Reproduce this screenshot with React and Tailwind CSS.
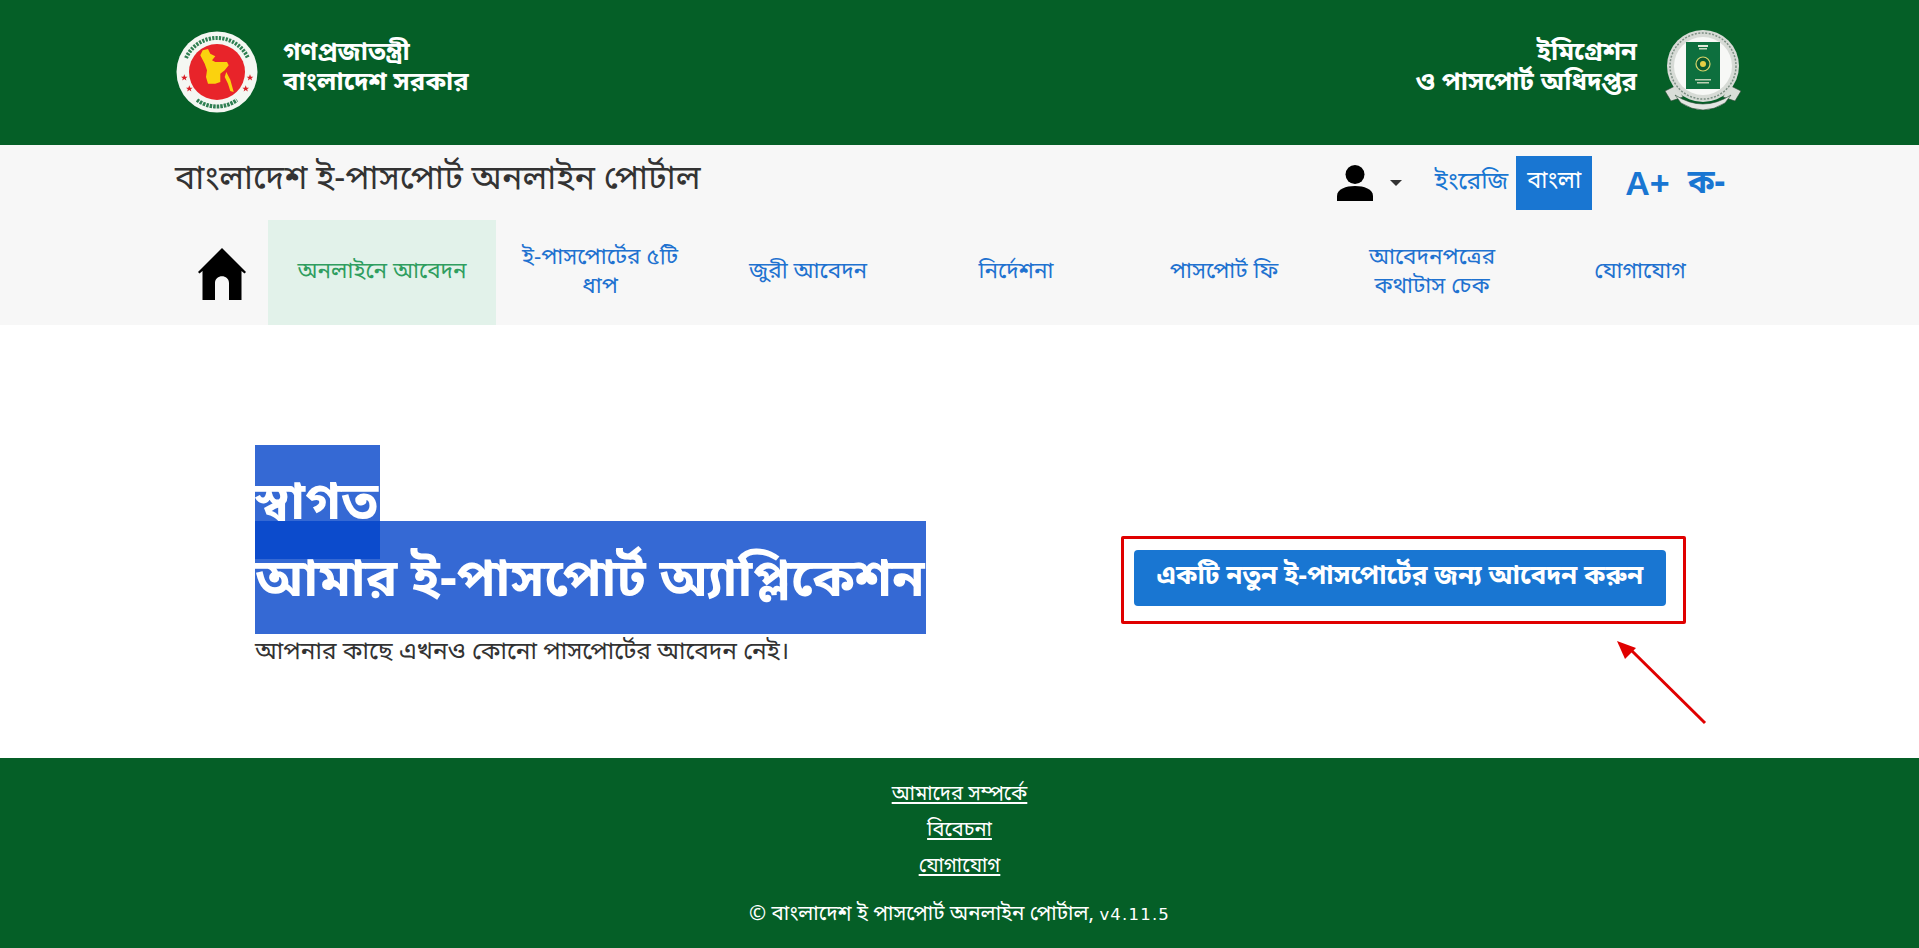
import React from "react";

function Star({ x, y }) {
  return <path transform={`translate(${x} ${y}) scale(0.95)`} d="M0 -3.6 L1 -1.1 L3.5 -1.1 L1.5 .5 L2.2 3 L0 1.5 L-2.2 3 L-1.5 .5 L-3.5 -1.1 L-1 -1.1 Z" fill="#d91f26" />;
}

function GovEmblem() {
  return (
    <svg width="84" height="84" viewBox="0 0 84 84" className="shrink-0 blur-[0.4px]">
      <circle cx="42" cy="42" r="40.5" fill="#f4f7f2" />
      <path d="M11 28 A34 34 0 0 1 73 28" fill="none" stroke="#2f7f52" strokeWidth="4" strokeDasharray="2.2 1.2" />
      <path d="M22 70 A34 34 0 0 0 62 70" fill="none" stroke="#2f7f52" strokeWidth="4" strokeDasharray="2.5 1" />
      <circle cx="42" cy="42" r="28" fill="#e8242a" />
      <path d="M27.7 20.3 L33 19 L35.3 23.7 L40.3 26.3 L37 30.3 L40.3 32 L52 32 L53.7 35.3 L49.7 40.3 L45.3 43.7 L45.3 52 L40.3 53.7 L33 53.7 L31 47 L32 40.3 L29.7 33.7 L25.3 25.3 Z" fill="#fbd20e" />
      <path d="M51.3 42 L55.3 49.7 L58.7 62 L55.3 61 L53 53.7 L49.7 47 Z" fill="#fbd20e" />
      <Star x={9.3} y={47.7} />
      <Star x={75} y={47.7} />
      <Star x={14.3} y={58.7} />
      <Star x={70.7} y={58.7} />
    </svg>
  );
}

function PassportEmblem() {
  return (
    <svg width="84" height="86" viewBox="0 0 84 86" className="shrink-0 blur-[0.3px]">
      <path d="M4 62 L16 56 L22 68 L10 72 Z M80 62 L68 56 L62 68 L74 72 Z" fill="#d9ded8" stroke="#2b4a35" strokeWidth="0.6" />
      <path d="M14 66 Q42 84 70 66 L64 74 Q42 88 20 74 Z" fill="#e3e6e2" stroke="#2b4a35" strokeWidth="0.6" />
      <circle cx="42" cy="37" r="36" fill="#d7dbd6" />
      <circle cx="42" cy="37" r="33" fill="none" stroke="#7d8f84" strokeWidth="1.5" strokeDasharray="2 1.5" />
      <circle cx="42" cy="37" r="29" fill="#f7f8f6" />
      <rect x="25" y="13" width="34" height="47" fill="#0d6f3e" />
      <rect x="37" y="16" width="10" height="2" fill="#dfe8d8" />
      <rect x="38" y="19" width="8" height="1.5" fill="#c9d8bf" />
      <circle cx="42" cy="35" r="7" fill="#0a5a30" stroke="#d9d56b" strokeWidth="1.2" />
      <circle cx="42" cy="35" r="3" fill="#e5cf45" />
      <rect x="34" y="50" width="16" height="1.5" fill="#bcd0b4" />
      <rect x="36" y="53" width="12" height="1.5" fill="#bcd0b4" />
    </svg>
  );
}

function NavItem({ children, active }) {
  return (
    <a className={active
      ? "w-[228px] h-full flex items-center justify-center text-center text-[#2f9e5f] bg-[#e2f2ea] px-4"
      : "w-[208px] h-full flex items-center justify-center text-center text-[#1f72d0] px-4"}>
      {children}
    </a>
  );
}

const bn = "font-['Noto_Sans_Bengali','Noto_Sans','Liberation_Sans',sans-serif]";

export default function App() {
  return (
    <div className={`h-[948px] flex flex-col bg-white overflow-hidden relative ${bn}`}>
      <header className="h-[145px] bg-[#055f27] flex items-center justify-between pl-[175px] pr-[174px] shrink-0 pb-[2px]">
        <div className="flex items-center gap-6">
          <GovEmblem />
          <div className="text-white font-bold text-[25.6px] leading-[30px] -mt-[6px]">
            <div>গণপ্রজাতন্ত্রী</div>
            <div>বাংলাদেশ সরকার</div>
          </div>
        </div>
        <div className="flex items-center gap-6">
          <div className="text-white font-bold text-[25.6px] leading-[30px] text-right -mt-[6px]">
            <div>ইমিগ্রেশন</div>
            <div>ও পাসপোর্ট অধিদপ্তর</div>
          </div>
          <PassportEmblem />
        </div>
      </header>

      <div className="h-[180px] bg-[#f7f7f7] shrink-0 flex flex-col">
        <div className="h-[75px] flex items-center justify-between pl-[175px] pr-[194px]">
          <div className="text-[34px] leading-[40px] text-[#333] -mt-[3px]">বাংলাদেশ ই-পাসপোর্ট অনলাইন পোর্টাল</div>
          <div className="flex items-center">
            <svg width="36" height="36" viewBox="0 0 36 36" className="mt-[1px]">
              <circle cx="18" cy="9.5" r="9.5" fill="#000" />
              <path d="M0 36 V31 C0 24 9 21 18 21 C27 21 36 24 36 31 V36 Z" fill="#000" />
            </svg>
            <svg width="12" height="6" viewBox="0 0 12 6" className="ml-[17px]">
              <path d="M0 0 H12 L6 6 Z" fill="#333" />
            </svg>
            <span className="ml-[33px] text-[#1976d2] text-[24px]">ইংরেজি</span>
            <span className="ml-[8px] w-[76px] h-[54px] bg-[#1976d2] text-white text-[23.5px] flex items-center justify-center">বাংলা</span>
            <span className="ml-[33px] text-[#1976d2] text-[34px] leading-[40px] font-bold font-['Liberation_Sans','Noto_Sans_Bengali',sans-serif]">A+</span>
            <span className="ml-[18px] text-[#1976d2] text-[33px] leading-[40px] font-bold mt-[4px]">ক-</span>
          </div>
        </div>
        <nav className="h-[105px] flex items-center pl-[175px] text-[22.5px] leading-[29px]">
          <div className="w-[93px] h-full flex items-center justify-center">
            <svg width="48" height="52" viewBox="0 0 48 52" className="mt-[2px]">
              <path fillRule="evenodd" d="M24 0 L48 24 L46.5 25.5 L43.5 23 V52 H31 V35 C31 26 17 26 17 35 V52 H4.5 V23 L1.5 25.5 L0 24 Z" fill="#000" />
            </svg>
          </div>
          <NavItem active>অনলাইনে আবেদন</NavItem>
          <NavItem>ই-পাসপোর্টের ৫টি ধাপ</NavItem>
          <NavItem>জুরী আবেদন</NavItem>
          <NavItem>নির্দেশনা</NavItem>
          <NavItem>পাসপোর্ট ফি</NavItem>
          <NavItem>আবেদনপত্রের কথাটাস চেক</NavItem>
          <NavItem>যোগাযোগ</NavItem>
        </nav>
      </div>

      <main className="flex-1 flex pl-[255px] pt-[120px] relative">
        <div className="w-[671px]">
          <h1 className="w-[125px] h-[114px] bg-[rgba(3,67,201,0.8)] text-white font-bold text-[52.5px] leading-[76px] flex items-end whitespace-nowrap pb-[15px]">স্বাগত</h1>
          <h1 className="w-[671px] h-[113px] -mt-[38px] bg-[rgba(3,67,201,0.8)] text-white font-bold text-[52.5px] leading-[76px] flex items-end whitespace-nowrap pb-[13px]">আমার ই-পাসপোর্ট অ্যাপ্লিকেশন</h1>
          <p className="text-[24.4px] leading-[30px] text-[#333] mt-[4px] whitespace-nowrap">আপনার কাছে এখনও কোনো পাসপোর্টের আবেদন নেই।</p>
        </div>
        <button className="ml-[208px] mt-[105px] w-[532px] h-[56px] bg-[#1976d2] rounded-[4px] text-white font-bold text-[26.2px] flex items-center justify-center whitespace-nowrap">একটি নতুন ই-পাসপোর্টের জন্য আবেদন করুন</button>
        <div className="absolute left-[1121px] top-[211px] w-[565px] h-[88px] border-[3px] border-[#e00000] rounded-[2px]" />
        <svg className="absolute left-[1610px] top-[310px]" width="100" height="100" viewBox="0 0 100 100">
          <path d="M95 88 L20 14" stroke="#e00000" strokeWidth="3" fill="none" />
          <path d="M7 6 L26 13 L15 24 Z" fill="#e00000" />
        </svg>
      </main>

      <footer className="h-[190px] bg-[#055f27] text-white flex flex-col items-center pt-[19px] text-[20.1px] shrink-0">
        <a className="underline leading-[36px]">আমাদের সম্পর্কে</a>
        <a className="underline leading-[36px]">বিবেচনা</a>
        <a className="underline leading-[36px]">যোগাযোগ</a>
        <p className="mt-[12px] leading-[36px] text-[20.6px]">© বাংলাদেশ ই পাসপোর্ট অনলাইন পোর্টাল, <span className="font-['DejaVu_Sans',sans-serif] text-[16.5px] tracking-[1.2px]">v4.11.5</span></p>
      </footer>
    </div>
  );
}
